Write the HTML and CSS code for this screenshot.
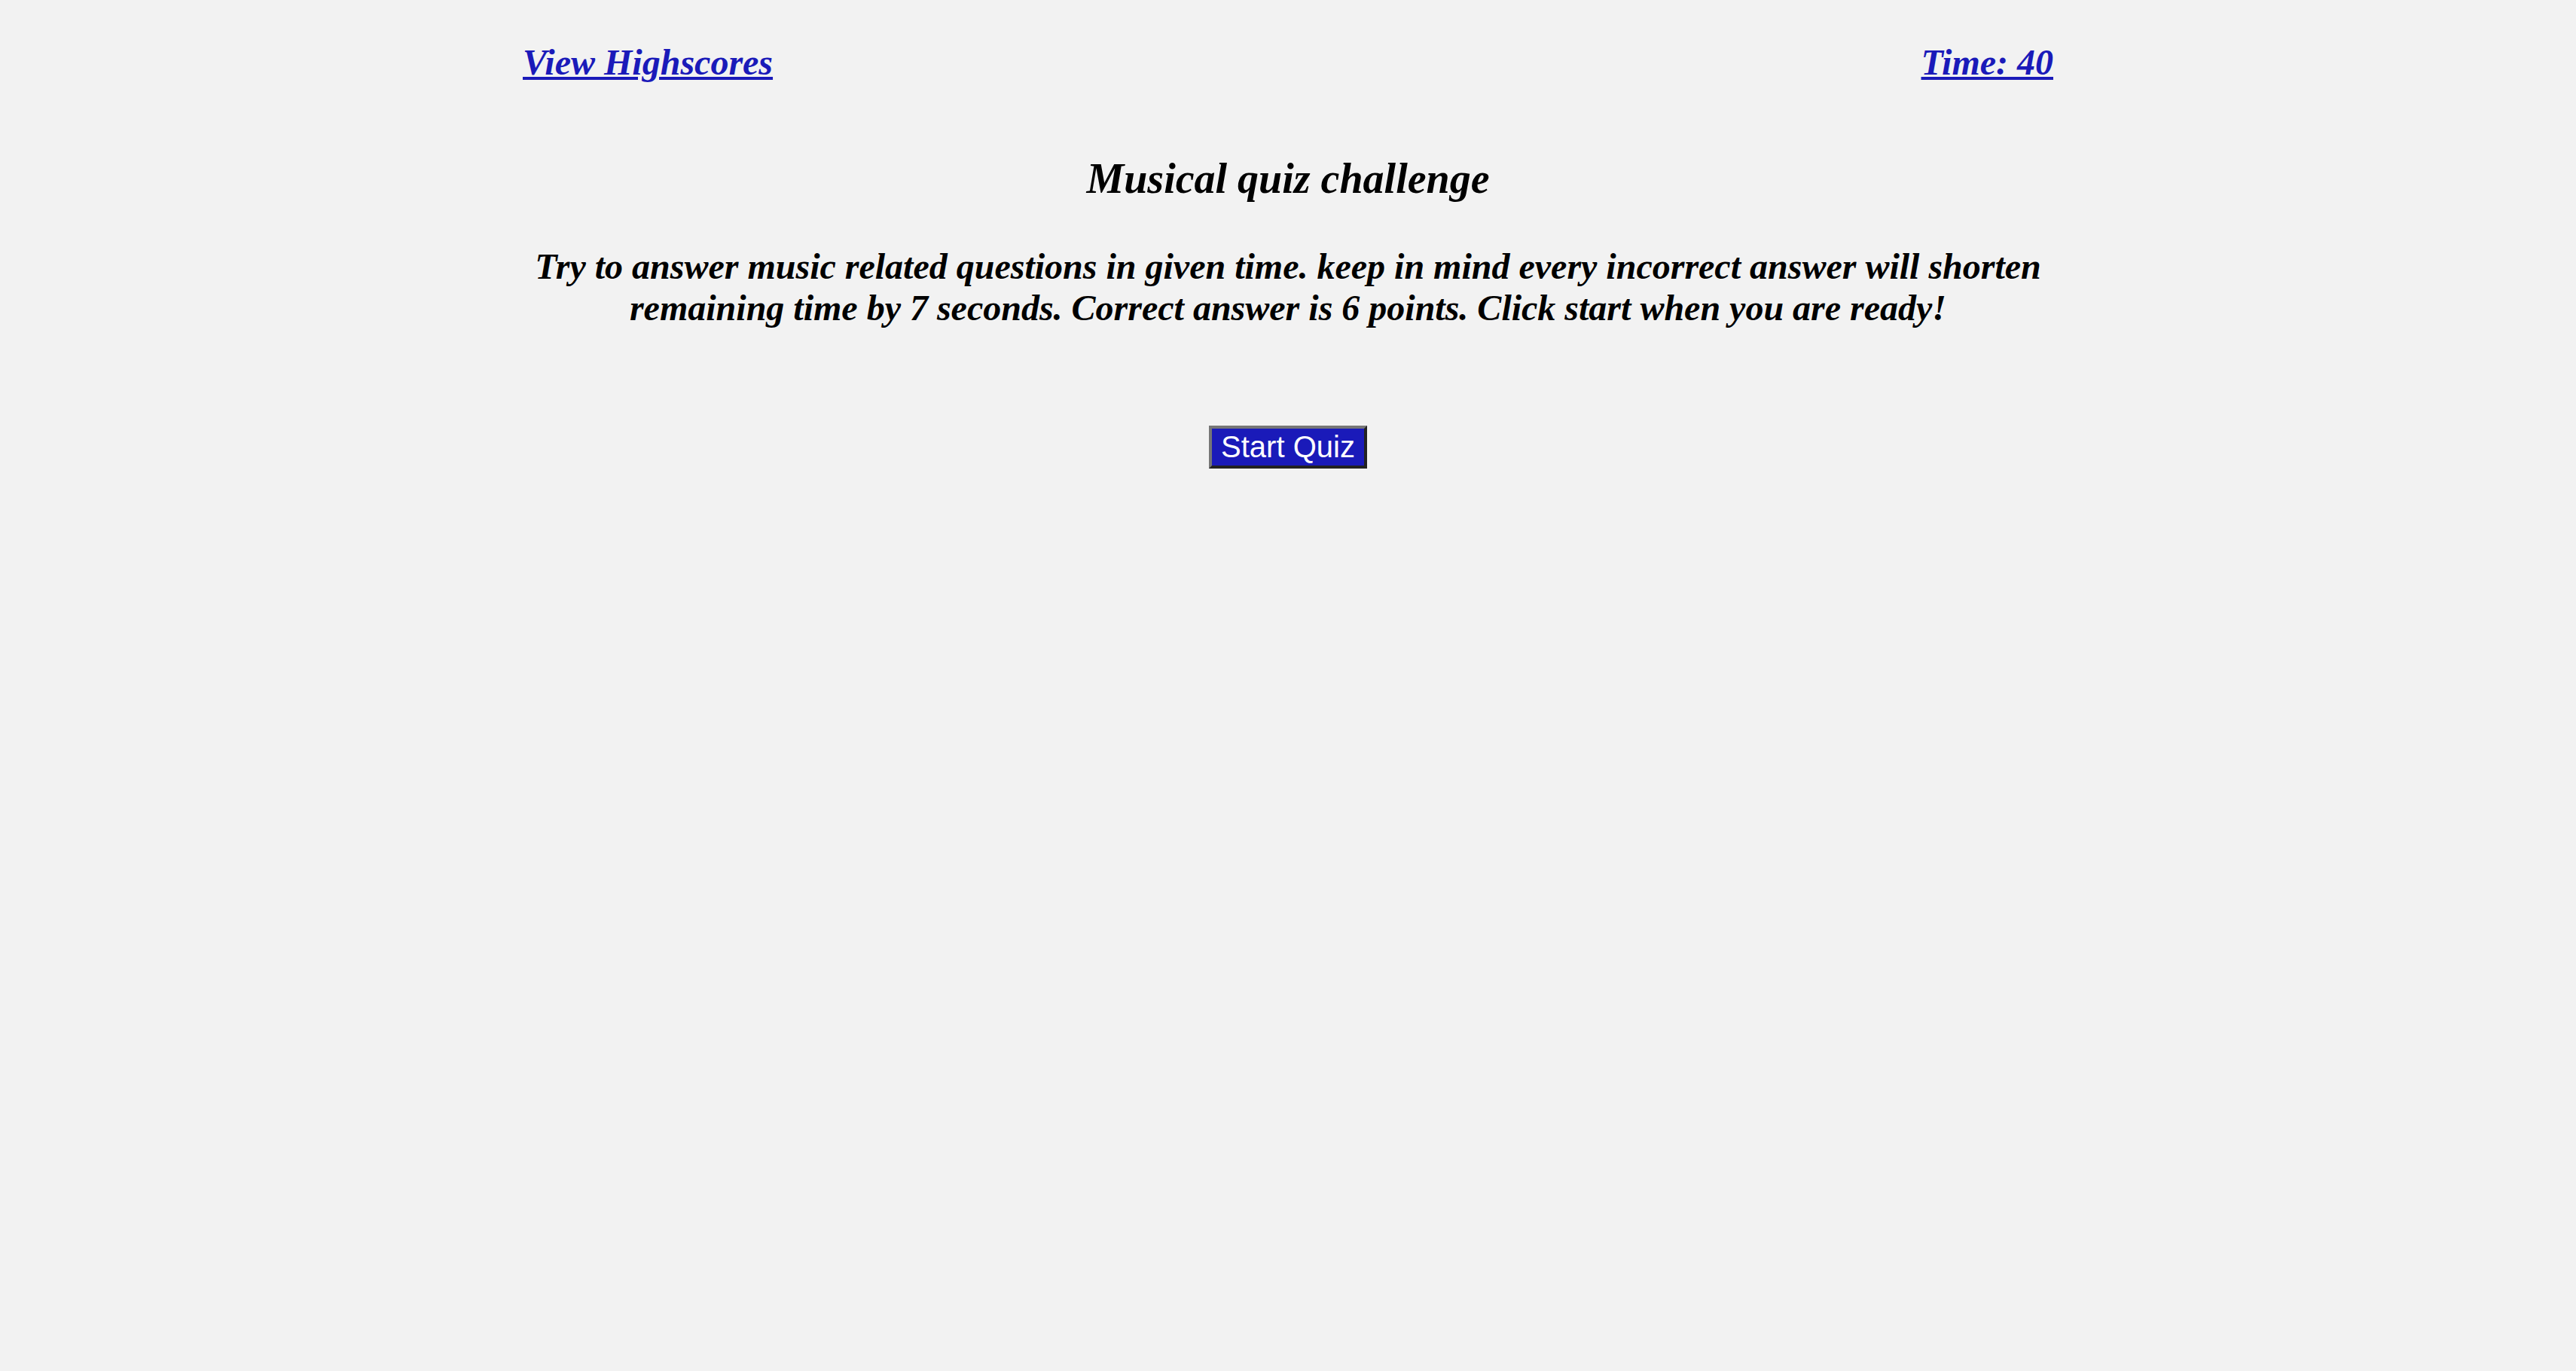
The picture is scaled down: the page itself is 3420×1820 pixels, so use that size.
FILE: index.html
```html
<!DOCTYPE html>
<html lang="en">
<head>
<meta charset="utf-8">
<title>Musical quiz challenge</title>
<link rel="stylesheet" href="styles.css">
</head>
<body>
<div class="page">
  <header class="top-bar">
    <a class="top-link" href="#">View Highscores</a>
    <a class="top-link" href="#">Time: 40</a>
  </header>
  <main class="intro">
    <h1 class="title">Musical quiz challenge</h1>
    <p class="lead">Try to answer music related questions in given time. keep in mind every incorrect answer will shorten remaining time by 7 seconds. Correct answer is 6 points. Click start when you are ready!</p>
    <button class="start-btn" type="button">Start Quiz</button>
  </main>
</div>
</body>
</html>
```
FILE: styles.css
```css
html, body {
  margin: 0;
  padding: 0;
  background: #f2f2f2;
}

body {
  font-family: "Liberation Serif", "Times New Roman", serif;
  color: #000;
}

.page {
  width: 2032px;
  margin: 0 auto;
  padding-top: 55px;
}

.top-bar {
  display: flex;
  justify-content: space-between;
  align-items: baseline;
}

.top-link {
  font-size: 48px;
  font-weight: bold;
  font-style: italic;
  color: #1a1ab9;
  text-decoration: underline;
  line-height: 55px;
}

.intro {
  display: flex;
  flex-direction: column;
  align-items: center;
  text-align: center;
}

.title {
  margin: 95px 0 0;
  font-size: 56px;
  line-height: 64px;
  font-weight: bold;
  font-style: italic;
}

.lead {
  margin: 57px 0 0;
  font-size: 48px;
  line-height: 55px;
  font-weight: bold;
  font-style: italic;
}

.start-btn {
  margin-top: 129px;
  font-family: "Liberation Sans", Arial, sans-serif;
  font-size: 40px;
  line-height: 45px;
  color: #fff;
  background: #1a1ab9;
  padding: 2px 12px;
  border-width: 4px;
  border-style: solid;
  border-color: #767676 #222 #222 #767676;
  border-radius: 0;
  cursor: pointer;
}
```
